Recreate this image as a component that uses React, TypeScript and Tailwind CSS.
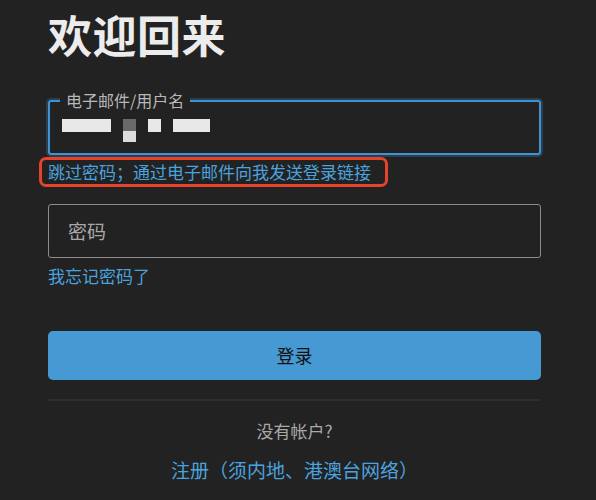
import React from "react";

export default function App() {
  const font = { fontFamily: '"Noto Sans CJK SC", "Noto Sans", sans-serif' };
  return (
    <div className="w-[596px] h-[500px] bg-[#222222] overflow-hidden" style={font}>
      <div className="ml-[48px] w-[493px] flex flex-col">
        <h1 className="mt-[4px] h-[60px] text-[44px] leading-[60px] font-bold text-[#ececec] tracking-[0.5px]">欢迎回来</h1>

        <div className="relative mt-[36px] h-[55px] rounded-[3px] border-2 border-[#3d93d4] ring-2 ring-[#2d4a60]/70">
          <span className="absolute left-[10px] top-[-13px] px-[6px] bg-[#222222] text-[16px] leading-[22px] text-[#b8b8b8]">电子邮件/用户名</span>
          <div className="flex items-start h-full pl-[12px] pt-[17px] gap-0">
            <div className="w-[49px] h-[13px] bg-[#e8e8e8]" />
            <div className="ml-[12px] w-[13px] flex flex-col">
              <div className="h-[12px] bg-[#6a6a6a]" />
              <div className="h-[11px] bg-[#dcdcdc]" />
            </div>
            <div className="ml-[12px] w-[13px] h-[13px] bg-[#e8e8e8]" />
            <div className="ml-[12px] w-[37px] h-[13px] bg-[#e8e8e8]" />
          </div>
        </div>

        <div className="ml-[-9px] mt-[2px] w-[349px] h-[30px] rounded-[7px] border-[3px] border-[#e5432c] flex items-center pl-[6px]">
          <span className="text-[17px] leading-[22px] text-[#4aa3df]">跳过密码；通过电子邮件向我发送登录链接</span>
        </div>

        <div className="mt-[17px] h-[54px] rounded-[3px] border border-[#8c8c8c] flex items-center pl-[19px]">
          <span className="text-[19px] text-[#a8a8a8]">密码</span>
        </div>

        <div className="mt-[6px] text-[17px] leading-[24px] text-[#4aa3df]">我忘记密码了</div>

        <button className="mt-[43px] h-[49px] rounded-[5px] bg-[#4799d3] text-[18px] text-[#111111] flex items-center justify-center">
          登录
        </button>

        <div className="mt-[19px] h-[2px] bg-[#2e2e2e]" />

        <div className="mt-[18px] text-center text-[17px] leading-[24px] text-[#a9a9a9]">没有帐户?</div>

        <div className="mt-[14px] text-center text-[19px] leading-[26px] text-[#4aa3df]">注册（须内地、港澳台网络）</div>
      </div>
    </div>
  );
}
